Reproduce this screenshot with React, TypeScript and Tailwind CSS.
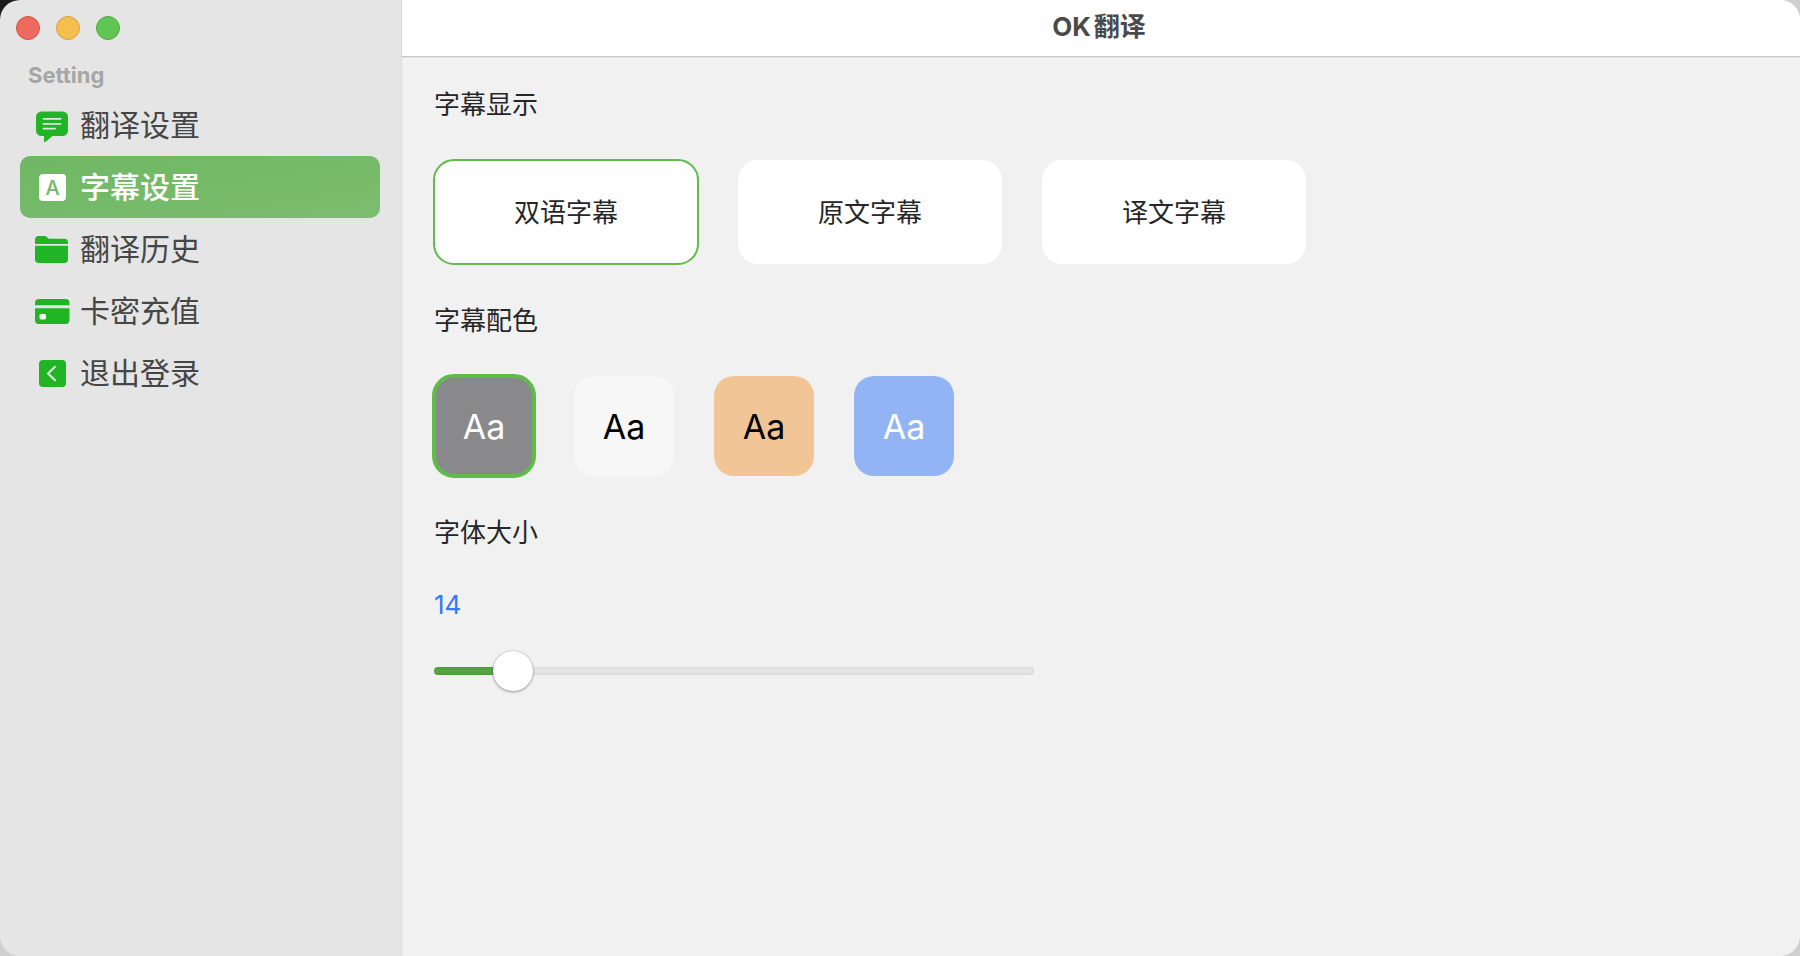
import { useState } from "react";
import type { CSSProperties, ReactNode } from "react";
import clsx from "clsx";

interface NavItem {
  id: string;
  label: string;
  icon: ReactNode;
}

interface Swatch {
  id: string;
  className: string;
}

const MIN_SIZE = 10;
const MAX_SIZE = 48;

const navItems: NavItem[] = [
  {
    id: "translate",
    label: "翻译设置",
    icon: (
      <>
        <path
          d="M7.5 4.5h21a5.5 5.5 0 0 1 5.5 5.5v13.5a5.5 5.5 0 0 1-5.5 5.5H18.5L12 34.6c-1 .8-2 .4-2-.8V29H7.5A5.5 5.5 0 0 1 2 23.5V10a5.5 5.5 0 0 1 5.5-5.5z"
          fill="currentColor"
        />
        <path
          d="M9.5 11.800h17M9.5 16.800h17M9.5 21.600h11.500"
          className="stroke-[#e5e5e5]"
          strokeWidth="1.8"
          strokeLinecap="round"
        />
      </>
    ),
  },
  {
    id: "subtitle",
    label: "字幕设置",
    icon: (
      <>
        <rect x="5" y="5" width="27" height="27" rx="4" fill="currentColor" />
        <text
          x="18.5"
          y="25.5"
          textAnchor="middle"
          fontSize="20"
          fontWeight="500"
          className="fill-[#72b866]"
        >
          A
        </text>
      </>
    ),
  },
  {
    id: "history",
    label: "翻译历史",
    icon: (
      <>
        <path
          d="M1 13V8.500A3.800 3.800 0 0 1 4.800 5h5.400c1.300 0 2 .4 2.800 1.200.9.900 1.600 1.500 2.800 1.500h14.400A3.800 3.800 0 0 1 34 11.500V13z"
          fill="currentColor"
        />
        <path
          d="M1 14.800h33v13.400a3.800 3.800 0 0 1-3.800 3.800H4.800A3.800 3.800 0 0 1 1 28.200z"
          fill="currentColor"
        />
      </>
    ),
  },
  {
    id: "recharge",
    label: "卡密充值",
    icon: (
      <>
        <path
          d="M1 12.200V10a4 4 0 0 1 4-4h26.500a4 4 0 0 1 4 4v2.200z"
          fill="currentColor"
        />
        <path
          d="M1 15.200h34.500V27a4 4 0 0 1-4 4H5a4 4 0 0 1-4-4z"
          fill="currentColor"
        />
        <rect x="5.5" y="21" width="6.5" height="5.5" rx="1.4" className="fill-[#f4f4f4]" />
      </>
    ),
  },
  {
    id: "logout",
    label: "退出登录",
    icon: (
      <>
        <rect x="5" y="5" width="27" height="27" rx="4" fill="currentColor" />
        <path
          d="M21 11.800l-7 6.700 7 6.700"
          fill="none"
          className="stroke-[#e5e5e5]"
          strokeWidth="2"
          strokeLinecap="round"
          strokeLinejoin="round"
        />
      </>
    ),
  },
];

const displayModes = ["双语字幕", "原文字幕", "译文字幕"];

const swatches: Swatch[] = [
  { id: "gray", className: "bg-[#89898b] text-white" },
  { id: "light", className: "bg-[#f7f7f7] text-black" },
  { id: "orange", className: "bg-[#f1c596] text-black" },
  { id: "blue", className: "bg-[#93b4f4] text-white" },
];

function Sidebar({
  active,
  onSelect,
}: {
  active: string;
  onSelect: (id: string) => void;
}) {
  return (
    <aside className="w-[402px] shrink-0 bg-[#e5e5e5] border-r border-[#d9d9d9] pl-5 pr-[21px] pt-4">
      {/* Window controls */}
      <div className="flex gap-4 -ml-1">
        <button aria-label="Close" className="size-6 rounded-full bg-[#ec6a5e] border border-[#d5544a]" />
        <button aria-label="Minimize" className="size-6 rounded-full bg-[#f5bf4f] border border-[#d6a144]" />
        <button aria-label="Zoom" className="size-6 rounded-full bg-[#61c554] border border-[#52a842]" />
      </div>

      <h2 className="mt-5 pl-2 text-[22px] leading-[30px] font-bold text-[#a6a6a6]">
        Setting
      </h2>

      <nav className="mt-1 flex flex-col">
        {navItems.map((item) => (
          <button
            key={item.id}
            onClick={() => onSelect(item.id)}
            aria-current={item.id === active ? "page" : undefined}
            className={clsx(
              "flex items-center gap-2.5 h-[62px] px-3.5 rounded-[10px] text-[30px] cursor-pointer",
              item.id === active
                ? "bg-linear-to-br from-[#70b765] to-[#7abd6e] text-white font-medium"
                : "text-[#464646]",
            )}
          >
            <svg
              viewBox="0 0 36 36"
              aria-hidden="true"
              className={clsx(
                "size-9 shrink-0",
                item.id === active ? "text-white" : "text-[#1fb524]",
              )}
            >
              {item.icon}
            </svg>
            {item.label}
          </button>
        ))}
      </nav>
    </aside>
  );
}

export default function App() {
  const [activeNav, setActiveNav] = useState("subtitle");
  const [mode, setMode] = useState(displayModes[0]);
  const [swatch, setSwatch] = useState("gray");
  const [fontSize, setFontSize] = useState(14);

  const percent = ((fontSize - MIN_SIZE) / (MAX_SIZE - MIN_SIZE)) * 100;

  return (
    <div className="min-h-screen flex bg-[linear-gradient(135deg,#1c1c1c_0%,#1c1c1c_1%,#cfcfcf_2%)] font-['Inter','Noto_Sans_CJK_SC',sans-serif]">
      <div className="flex-1 flex rounded-[20px] overflow-hidden">
        <Sidebar active={activeNav} onSelect={setActiveNav} />

        <div className="flex-1 min-w-0 flex flex-col bg-[#f1f1f1]">
          <header className="h-[57px] flex items-center justify-center pb-1 pr-1 bg-white border-b border-[#c8c8c8] shadow-[0_1px_0_#e4e4e4]">
            <h1 className="flex gap-[3px] text-[26px] font-bold text-[#4a4a4a]">
              <span>OK</span>
              <span>翻译</span>
            </h1>
          </header>

          <main className="px-8 pt-7 pb-10 text-[26px] text-[#262626]">
            <section>
              <h2 className="leading-10">字幕显示</h2>
              <div className="mt-[35px] flex flex-wrap gap-10">
                {displayModes.map((m) => (
                  <button
                    key={m}
                    onClick={() => setMode(m)}
                    aria-pressed={m === mode}
                    className={clsx(
                      "w-[264px] h-[104px] rounded-[20px] bg-white cursor-pointer",
                      m === mode && "outline-2 -outline-offset-1 outline-[#5fbc49]",
                    )}
                  >
                    {m}
                  </button>
                ))}
              </div>
            </section>

            <section className="mt-[37px]">
              <h2 className="leading-10">字幕配色</h2>
              <div className="mt-[35px] flex flex-wrap gap-10">
                {swatches.map((s) => (
                  <button
                    key={s.id}
                    onClick={() => setSwatch(s.id)}
                    aria-pressed={s.id === swatch}
                    className={clsx(
                      "size-[100px] rounded-[20px] text-[34px] cursor-pointer",
                      s.className,
                      s.id === swatch && "outline-4 -outline-offset-2 outline-[#5fbc49]",
                    )}
                  >
                    Aa
                  </button>
                ))}
              </div>
            </section>

            <section className="mt-[37px]">
              <h2 className="leading-10">
                <label htmlFor="font-size">字体大小</label>
              </h2>
              <output htmlFor="font-size" className="block mt-8 leading-10 text-[#3478f6]">
                {fontSize}
              </output>
              <input
                id="font-size"
                type="range"
                min={MIN_SIZE}
                max={MAX_SIZE}
                value={fontSize}
                onChange={(e) => setFontSize(Number(e.target.value))}
                className="block mt-[26px] w-full max-w-[600px] h-10 appearance-none bg-transparent cursor-pointer [&::-webkit-slider-runnable-track]:h-2 [&::-webkit-slider-runnable-track]:rounded-full [&::-webkit-slider-runnable-track]:bg-[image:var(--track)] [&::-webkit-slider-runnable-track]:shadow-[inset_0_0_2px_rgba(0,0,0,0.12)] [&::-webkit-slider-thumb]:appearance-none [&::-webkit-slider-thumb]:size-10 [&::-webkit-slider-thumb]:-mt-4 [&::-webkit-slider-thumb]:rounded-full [&::-webkit-slider-thumb]:bg-white [&::-webkit-slider-thumb]:shadow-[0_1px_3px_rgba(0,0,0,0.35),0_0_1px_rgba(0,0,0,0.3)]"
                style={
                  {
                    "--track": `linear-gradient(to right, #51a53f ${percent}%, #e3e3e3 ${percent}%)`,
                  } as CSSProperties
                }
              />
            </section>
          </main>
        </div>
      </div>
    </div>
  );
}
